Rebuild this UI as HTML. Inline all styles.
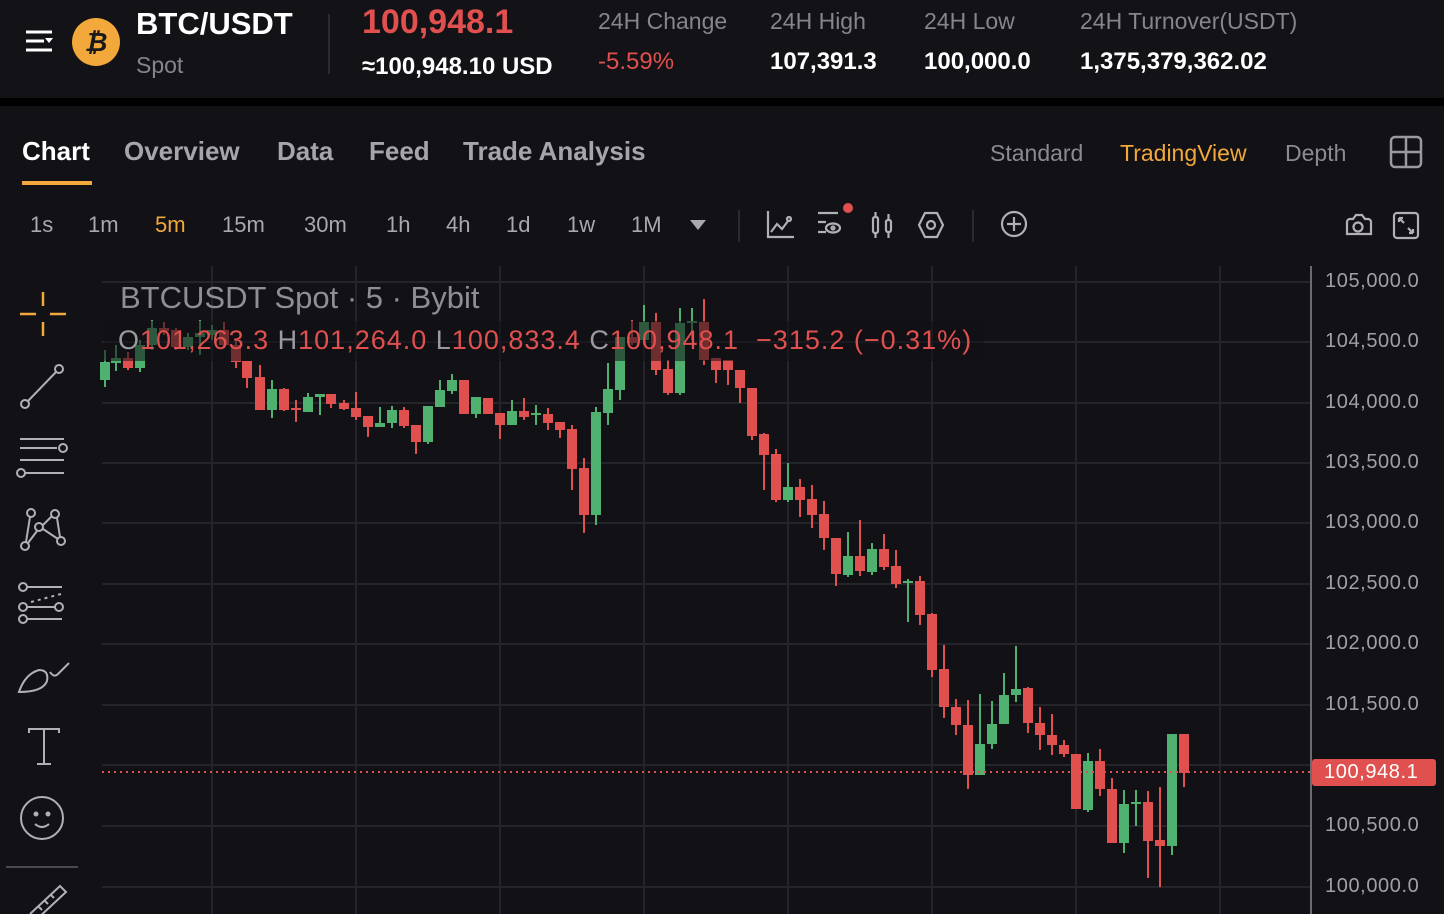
<!DOCTYPE html>
<html><head><meta charset="utf-8"><style>
*{margin:0;padding:0;box-sizing:border-box}
body{width:1444px;height:914px;overflow:hidden;background:#111116;font-family:"Liberation Sans",sans-serif;position:relative;color:#fff}
.a{position:absolute;white-space:nowrap}
.hdr{position:absolute;left:0;top:0;width:1444px;height:98px;background:#121217}
.sep{position:absolute;left:0;top:98px;width:1444px;height:8px;background:#000}
.lbl{color:#85858b;font-size:23px}
.val{color:#fff;font-size:24px;font-weight:bold}
.tab{font-size:26px;font-weight:bold;color:#a5a5ab;top:136px}
.tf{font-size:22px;color:#a8a8ae;top:212px}
.ax{font-size:20px;color:#a0a0a6;left:1325px;letter-spacing:0.6px}
</style></head><body>
<div class="hdr"></div><div class="sep"></div>
<svg class="a" style="left:24px;top:28px" width="32" height="28" viewBox="0 0 32 28"><g stroke="#fff" stroke-width="3"><line x1="2" y1="4" x2="28" y2="4"/><line x1="2" y1="13" x2="20" y2="13"/><line x1="2" y1="22" x2="28" y2="22"/></g><path d="M21 10h8l-4 5z" fill="#fff"/></svg>
<div class="a" style="left:72px;top:18px;width:48px;height:48px;border-radius:50%;background:#f2a83a;color:#1a1a1a;font-weight:bold;font-size:26px;text-align:center;line-height:48px;font-style:italic">₿</div>
<div class="a" style="left:136px;top:6px;font-size:31px;font-weight:bold">BTC/USDT</div>
<div class="a" style="left:136px;top:52px;font-size:23px;color:#85858b">Spot</div>
<div class="a" style="left:328px;top:14px;width:2px;height:60px;background:#2a2a30"></div>
<div class="a" style="left:362px;top:3px;font-size:34px;font-weight:bold;color:#e0504f">100,948.1</div>
<div class="a" style="left:362px;top:53px;font-size:24px;font-weight:bold">≈100,948.10 USD</div>
<div class="a lbl" style="left:598px;top:8px">24H Change</div>
<div class="a val" style="left:598px;top:48px;color:#e0504f;font-weight:normal">-5.59%</div>
<div class="a lbl" style="left:770px;top:8px">24H High</div>
<div class="a val" style="left:770px;top:48px">107,391.3</div>
<div class="a lbl" style="left:924px;top:8px">24H Low</div>
<div class="a val" style="left:924px;top:48px">100,000.0</div>
<div class="a lbl" style="left:1080px;top:8px">24H Turnover(USDT)</div>
<div class="a val" style="left:1080px;top:48px">1,375,379,362.02</div>

<div class="a tab" style="left:22px;color:#fff">Chart</div>
<div class="a" style="left:22px;top:181px;width:70px;height:4px;background:#f2a83a"></div>
<div class="a tab" style="left:124px">Overview</div>
<div class="a tab" style="left:277px">Data</div>
<div class="a tab" style="left:369px">Feed</div>
<div class="a tab" style="left:463px">Trade Analysis</div>
<div class="a" style="left:990px;top:140px;font-size:23px;color:#8a8a90">Standard</div>
<div class="a" style="left:1120px;top:140px;font-size:23px;color:#f2a83a">TradingView</div>
<div class="a" style="left:1285px;top:140px;font-size:23px;color:#8a8a90">Depth</div>
<svg class="a" style="left:1389px;top:135px" width="34" height="34"><rect x="2" y="2" width="30" height="30" rx="4" fill="none" stroke="#9a9aa0" stroke-width="2.5"/><line x1="17" y1="2" x2="17" y2="32" stroke="#9a9aa0" stroke-width="2.5"/><line x1="2" y1="17" x2="32" y2="17" stroke="#9a9aa0" stroke-width="2.5"/></svg>

<div class="a tf" style="left:30px">1s</div>
<div class="a tf" style="left:88px">1m</div>
<div class="a tf" style="left:155px;color:#f2a83a">5m</div>
<div class="a tf" style="left:222px">15m</div>
<div class="a tf" style="left:304px">30m</div>
<div class="a tf" style="left:386px">1h</div>
<div class="a tf" style="left:446px">4h</div>
<div class="a tf" style="left:506px">1d</div>
<div class="a tf" style="left:567px">1w</div>
<div class="a tf" style="left:631px">1M</div>
<svg class="a" style="left:689px;top:218px" width="18" height="14"><path d="M1 2h16l-8 10z" fill="#a8a8ae"/></svg>
<div class="a" style="left:738px;top:210px;width:2px;height:32px;background:#2a2a30"></div>
<div class="a" style="left:972px;top:210px;width:2px;height:32px;background:#2a2a30"></div>
<svg class="a" style="left:760px;top:200px" width="680" height="50" viewBox="760 200 680 50" fill="none" stroke="#b0b0b6" stroke-width="2.2">
<path d="M768 211v26h26M771 232l6-8 5 5 6-8"/><circle cx="789" cy="219" r="2"/>
<path d="M818 213h20M818 222h8M818 232h8"/><ellipse cx="833" cy="228" rx="7" ry="4.5"/><circle cx="833" cy="228" r="1.5"/>
<circle cx="848" cy="208" r="5" fill="#e0504f" stroke="none"/>
<rect x="873" y="217" width="5" height="16" rx="2"/><path d="M875.5 212v5M875.5 233v5"/><rect x="886" y="220" width="5" height="12" rx="2"/><path d="M888.5 214v6M888.5 232v6"/>
<path d="M925 213h12l6 12-6 12h-12l-6-12z"/><circle cx="931" cy="225" r="4"/>
<circle cx="1014" cy="224" r="12"/><path d="M1014 217v14M1007 224h14"/>
<path d="M1347 222a3 3 0 0 1 3-3h3l3-4h6l3 4h3a3 3 0 0 1 3 3v12h-24z"/><circle cx="1358" cy="227" r="4.5"/>
<rect x="1394" y="213" width="24" height="25" rx="3"/><path d="M1399 218l5 5M1399 218v4M1399 218h4M1413 233l-5-5M1413 233v-4M1413 233h-4"/>
</svg>

<!-- left toolbar -->
<svg class="a" style="left:0;top:280px" width="100" height="634" viewBox="0 0 100 634" fill="none" stroke="#b0b0b6" stroke-width="2">
<g stroke="#f2a83a" stroke-width="2.5"><path d="M43 12v14M43 42v14M20 34h16M50 34h16"/></g>
<circle cx="25" cy="124" r="4"/><circle cx="59" cy="89" r="4"/><path d="M28 121l28-29"/>
<path d="M20 159h44M20 168h37M20 180h44M25 193h39"/><circle cx="63" cy="168" r="4"/><circle cx="21" cy="193" r="4"/>
<circle cx="31" cy="233" r="4"/><circle cx="55" cy="234" r="4"/><circle cx="39" cy="247" r="4"/><circle cx="25" cy="266" r="4"/><circle cx="61" cy="261" r="4"/><path d="M30 237l-4 25M43 245l9-9M43 249l15 10M57 238l3 19M37 251l-9 12"/>
<circle cx="23" cy="307" r="4"/><circle cx="23" cy="327" r="4"/><circle cx="59" cy="327" r="4"/><circle cx="23" cy="339" r="4"/><path d="M27 307h35M27 327h28M27 339h35"/><path d="M31 322l30-8" stroke-dasharray="3 4"/>
<path d="M19 412q6-18 20-22 10 0 8 11-4 11-28 11zM50 392q4 6 8 2l11-11"/>
<path d="M29 453v-4h30v4M44 449v35M37 484h14"/>
<circle cx="42" cy="538" r="21"/><circle cx="36" cy="534" r="1.5" fill="#b0b0b6"/><circle cx="48" cy="534" r="1.5" fill="#b0b0b6"/><path d="M35 544q7 6 14 0"/>
<path d="M6 587h72" stroke="#4a4a50"/>
<path d="M30 634l30-28 6 6-30 28M38 626l4 4M44 620l4 4M50 614l4 4"/>
</svg>

<svg class="a" style="left:0;top:0" width="1444" height="914">
<g stroke="#24242a" stroke-width="2">
<line x1="102" y1="282" x2="1310" y2="282"/><line x1="102" y1="342" x2="1310" y2="342"/><line x1="102" y1="403" x2="1310" y2="403"/><line x1="102" y1="463" x2="1310" y2="463"/><line x1="102" y1="523" x2="1310" y2="523"/><line x1="102" y1="584" x2="1310" y2="584"/><line x1="102" y1="644" x2="1310" y2="644"/><line x1="102" y1="705" x2="1310" y2="705"/><line x1="102" y1="765" x2="1310" y2="765"/><line x1="102" y1="826" x2="1310" y2="826"/><line x1="102" y1="887" x2="1310" y2="887"/>
<line x1="212" y1="266" x2="212" y2="914"/><line x1="356" y1="266" x2="356" y2="914"/><line x1="500" y1="266" x2="500" y2="914"/><line x1="644" y1="266" x2="644" y2="914"/><line x1="788" y1="266" x2="788" y2="914"/><line x1="932" y1="266" x2="932" y2="914"/><line x1="1076" y1="266" x2="1076" y2="914"/><line x1="1220" y1="266" x2="1220" y2="914"/>
</g>
<line x1="1311" y1="266" x2="1311" y2="914" stroke="#6a6a70" stroke-width="2"/>
<g id="cd"></g>
<line x1="102" y1="772" x2="1310" y2="772" stroke="#e0504f" stroke-width="2" stroke-dasharray="2 4"/>
</svg>
<div class="a" style="left:104px;top:321px;width:880px;height:40px;background:rgba(17,17,22,0.55)"></div>
<div class="a" style="left:120px;top:280px;font-size:31px;color:#8e8e94">BTCUSDT Spot · 5 · Bybit</div>
<div class="a" style="left:118px;top:325px;font-size:27px;color:#e0504f;letter-spacing:1px"><span style="color:#9a9aa0">O</span>101,263.3 <span style="color:#9a9aa0">H</span>101,264.0 <span style="color:#9a9aa0">L</span>100,833.4 <span style="color:#9a9aa0">C</span>100,948.1 &nbsp;−315.2 (−0.31%)</div>

<div class="a ax" style="top:270px">105,000.0</div>
<div class="a ax" style="top:330px">104,500.0</div>
<div class="a ax" style="top:391px">104,000.0</div>
<div class="a ax" style="top:451px">103,500.0</div>
<div class="a ax" style="top:511px">103,000.0</div>
<div class="a ax" style="top:572px">102,500.0</div>
<div class="a ax" style="top:632px">102,000.0</div>
<div class="a ax" style="top:693px">101,500.0</div>
<div class="a ax" style="top:814px">100,500.0</div>
<div class="a ax" style="top:875px">100,000.0</div>
<div class="a" style="left:1312px;top:759px;width:124px;height:27px;background:#e0504f;border-radius:3px;color:#fff;font-size:20px;line-height:27px;padding-left:12px;letter-spacing:0.6px">100,948.1</div>
<script>
var d=[[105,'G',362,380,350,387],[116,'G',358,363,345,371],[128,'R',358,368,352,370],[140,'G',345,368,340,372],[152,'G',328,345,320,350],[164,'R',328,331,322,335],[176,'R',330,347,328,350],[188,'G',337,347,333,350],[200,'G',333,337,320,355],[212,'G',330,335,325,340],[224,'R',330,345,322,348],[236,'R',345,362,340,368],[247,'R',361,378,361,388],[260,'R',377,410,365,410],[272,'G',389,410,380,418],[284,'R',389,410,388,411],[296,'R',408,409,400,422],[308,'G',397,412,393,412],[320,'G',394,397,394,415],[331,'R',394,404,394,408],[344,'R',403,409,400,410],[356,'R',408,417,392,420],[368,'R',416,427,416,437],[380,'G',423,427,407,427],[392,'G',410,423,406,428],[404,'R',410,426,407,428],[416,'R',425,442,425,454],[428,'G',406,442,406,444],[440,'G',390,407,380,407],[452,'G',380,391,374,394],[464,'R',380,414,380,414],[476,'G',397,414,397,418],[488,'R',398,414,398,414],[500,'R',413,425,413,439],[512,'G',411,425,400,425],[524,'R',411,417,398,420],[536,'G',413,414,405,425],[548,'R',414,423,408,430],[560,'R',422,430,422,438],[572,'R',429,469,425,490],[584,'R',468,515,458,533],[596,'G',412,515,407,525],[608,'G',389,413,363,425],[620,'G',337,390,337,400],[632,'R',337,343,320,345],[644,'G',322,340,305,345],[656,'R',322,370,313,375],[668,'R',369,393,360,395],[680,'G',323,393,308,395],[692,'G',321,323,308,340],[704,'R',322,360,299,365],[716,'R',358,370,358,383],[728,'R',360,370,360,385],[740,'R',370,388,370,403],[752,'R',388,436,388,440],[764,'R',434,455,433,490],[776,'R',454,500,449,502],[788,'G',487,500,463,502],[800,'R',487,500,479,517],[812,'R',499,515,485,528],[824,'R',514,538,501,550],[836,'R',538,574,538,586],[848,'G',556,575,532,577],[860,'R',556,571,520,576],[872,'G',549,572,543,575],[884,'R',549,567,534,570],[896,'R',566,584,550,588],[908,'G',581,583,579,622],[920,'R',581,615,576,625],[932,'R',614,670,613,677],[944,'R',669,707,645,718],[956,'R',707,725,699,735],[968,'R',725,775,700,789],[980,'G',744,775,694,775],[992,'G',724,744,701,749],[1004,'G',695,724,673,724],[1016,'G',689,695,646,702],[1028,'R',688,723,687,733],[1040,'R',723,735,707,750],[1052,'R',735,745,714,755],[1064,'R',745,754,740,757],[1076,'R',754,809,754,809],[1088,'G',761,810,753,812],[1100,'R',761,789,749,796],[1112,'R',789,843,778,843],[1124,'G',804,843,790,853],[1136,'G',802,803,790,826],[1148,'R',802,841,791,878],[1160,'R',840,846,787,887],[1172,'G',734,846,734,855],[1184,'R',734,773,734,787]];
var s='';d.forEach(function(c){var col=c[1]=='G'?'#50b070':'#e0504f';var h=Math.max(2,c[3]-c[2]);s+='<line x1="'+c[0]+'" x2="'+c[0]+'" y1="'+c[4]+'" y2="'+c[5]+'" stroke="'+col+'" stroke-width="2"/><rect x="'+(c[0]-5)+'" y="'+c[2]+'" width="10" height="'+h+'" fill="'+col+'"/>';});
document.getElementById('cd').innerHTML=s;
</script>
</body></html>
